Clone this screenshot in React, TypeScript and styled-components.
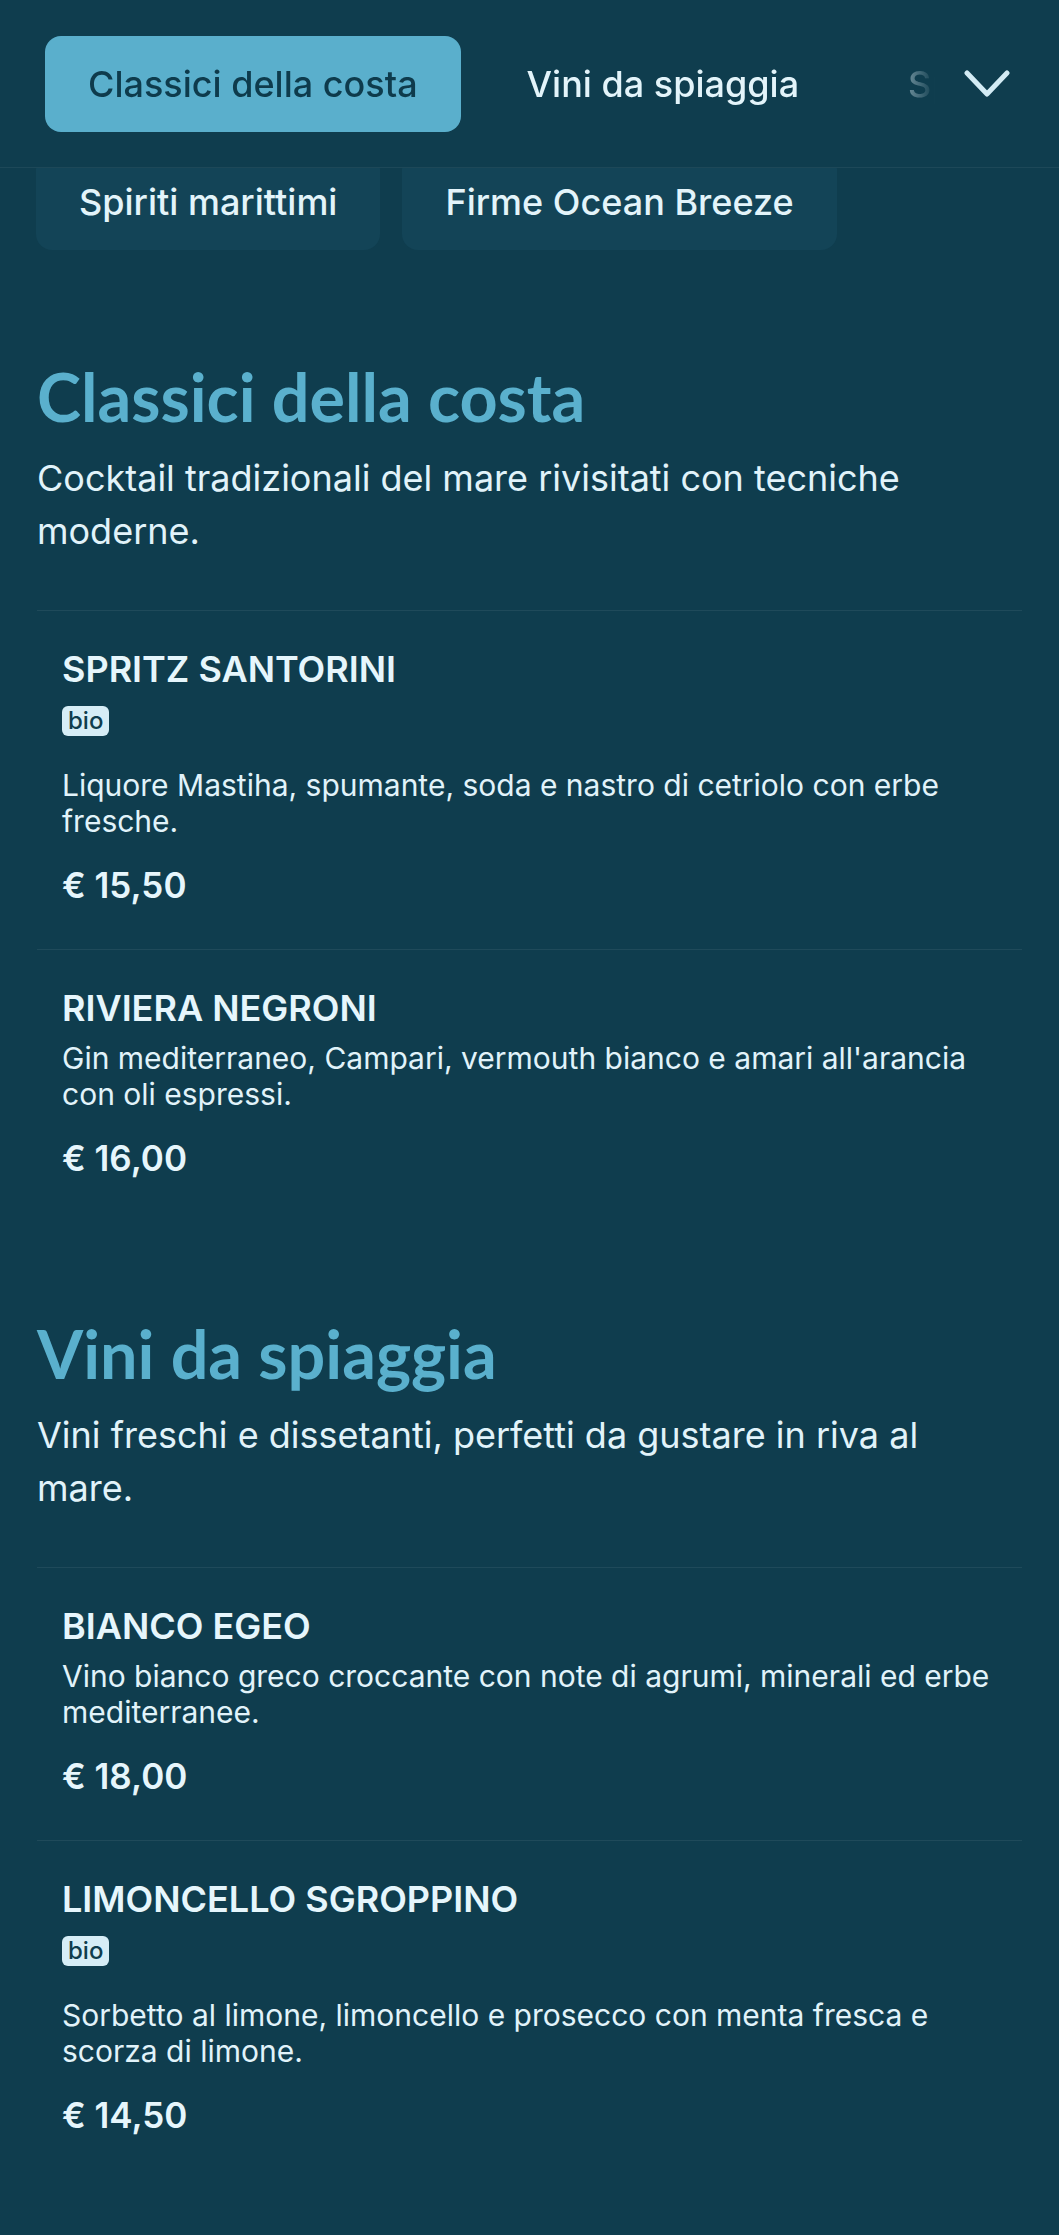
import React from 'react'
import styled, { createGlobalStyle } from 'styled-components'

const GlobalStyle = createGlobalStyle`
  html, body {
    margin: 0;
    padding: 0;
    background: #0f3d4e;
  }
  body {
    font-family: 'Inter', 'Noto Sans', sans-serif;
    color: #e1f3fa;
  }
  * { box-sizing: border-box; }
`

const Page = styled.div`
  min-height: 100vh;
  background: #0f3d4e;
`

const Header = styled.header`
  display: flex;
  align-items: center;
  height: 168px;
  padding: 0 20px 0 0;
  background: #0f3d4e;
  border-bottom: 1px solid rgba(255, 255, 255, 0.06);
`

const TabStrip = styled.nav`
  flex: 1;
  display: flex;
  gap: 23px;
  padding-left: 45px;
  overflow: hidden;
  -webkit-mask-image: linear-gradient(to right, #000 calc(100% - 62px), transparent);
  mask-image: linear-gradient(to right, #000 calc(100% - 62px), transparent);
`

const Tab = styled.button<{ $active?: boolean }>`
  flex-shrink: 0;
  height: 96px;
  padding: 0 43px;
  border: 0;
  border-radius: 16px;
  background: ${p => (p.$active ? '#5aafcc' : 'transparent')};
  color: ${p => (p.$active ? '#0e3b4c' : '#e3f4fa')};
  font-family: 'Inter', sans-serif;
  font-size: 36px;
  font-weight: 500;
  line-height: 96px;
  white-space: nowrap;
`

const ExpandButton = styled.button`
  width: 104px;
  height: 96px;
  display: flex;
  align-items: center;
  justify-content: center;
  border: 0;
  background: transparent;
  padding: 0;
`

const PeekRow = styled.div`
  height: 82px;
  overflow: hidden;
`

const PeekInner = styled.div`
  display: flex;
  gap: 22px;
  margin-top: -14px;
  padding-left: 36px;
`

const PeekChip = styled.div`
  height: 96px;
  padding: 0 43px;
  border-radius: 16px;
  background: #134457;
  color: #e3f4fa;
  font-size: 36px;
  font-weight: 500;
  line-height: 96px;
  white-space: nowrap;
`

const Main = styled.main`
  padding: 15px 37px 40px;
`

const Section = styled.section`
  padding-top: 90px;
`

const SectionTitle = styled.h2`
  margin: 0;
  font-family: 'Lato', 'Noto Sans', sans-serif;
  font-size: 66.5px;
  font-weight: 700;
  line-height: 82px;
  color: #5ab0cd;
`

const SectionIntro = styled.p`
  margin: 15px 0 52px;
  font-size: 36px;
  line-height: 53px;
  color: #e1f3fa;
`

const Item = styled.article`
  padding: 36px 25px 43px;
  border-top: 1px solid rgba(255, 255, 255, 0.07);
`

const ItemName = styled.h3`
  margin: 0;
  font-size: 36px;
  font-weight: 600;
  line-height: 44px;
  color: #e6f6fc;
`

const Badge = styled.span`
  display: block;
  width: fit-content;
  margin: 15px 0 31px;
  height: 30px;
  padding: 0 6px;
  border-radius: 6px;
  background: #d6edf6;
  color: #0f3d4e;
  font-size: 24px;
  font-weight: 500;
  line-height: 30px;
`

const ItemDesc = styled.p`
  margin: 10px 0 0;
  font-size: 30px;
  line-height: 36px;
  color: #e1f3fa;
`

const ItemPrice = styled.div`
  margin-top: 25px;
  font-size: 35px;
  font-weight: 600;
  line-height: 42px;
  color: #e6f6fc;
`

type Drink = { name: string; bio?: boolean; desc: string; price: string }
type MenuSection = { title: string; intro: string; items: Drink[] }

const tabs = ['Classici della costa', 'Vini da spiaggia', 'Spiriti marittimi', 'Firme Ocean Breeze']

const sections: MenuSection[] = [
  {
    title: 'Classici della costa',
    intro: 'Cocktail tradizionali del mare rivisitati con tecniche moderne.',
    items: [
      {
        name: 'SPRITZ SANTORINI',
        bio: true,
        desc: 'Liquore Mastiha, spumante, soda e nastro di cetriolo con erbe fresche.',
        price: '€ 15,50',
      },
      {
        name: 'RIVIERA NEGRONI',
        desc: "Gin mediterraneo, Campari, vermouth bianco e amari all'arancia con oli espressi.",
        price: '€ 16,00',
      },
    ],
  },
  {
    title: 'Vini da spiaggia',
    intro: 'Vini freschi e dissetanti, perfetti da gustare in riva al mare.',
    items: [
      {
        name: 'BIANCO EGEO',
        desc: 'Vino bianco greco croccante con note di agrumi, minerali ed erbe mediterranee.',
        price: '€ 18,00',
      },
      {
        name: 'LIMONCELLO SGROPPINO',
        bio: true,
        desc: 'Sorbetto al limone, limoncello e prosecco con menta fresca e scorza di limone.',
        price: '€ 14,50',
      },
    ],
  },
]

const Chevron = () => (
  <svg width="46" height="28" viewBox="0 0 46 28" fill="none">
    <polyline
      points="3,3 23,24 43,3"
      stroke="#d3ebf4"
      strokeWidth="5"
      strokeLinecap="round"
      strokeLinejoin="round"
    />
  </svg>
)

export default function App() {
  return (
    <Page>
      <GlobalStyle />
      <Header>
        <TabStrip>
          {tabs.map((t, i) => (
            <Tab key={t} $active={i === 0}>{t}</Tab>
          ))}
        </TabStrip>
        <ExpandButton aria-label="Mostra tutte le categorie">
          <Chevron />
        </ExpandButton>
      </Header>

      <PeekRow>
        <PeekInner>
          <PeekChip>Spiriti marittimi</PeekChip>
          <PeekChip>Firme Ocean Breeze</PeekChip>
        </PeekInner>
      </PeekRow>

      <Main>
        {sections.map(s => (
          <Section key={s.title}>
            <SectionTitle>{s.title}</SectionTitle>
            <SectionIntro>{s.intro}</SectionIntro>
            {s.items.map(d => (
              <Item key={d.name}>
                <ItemName>{d.name}</ItemName>
                {d.bio && <Badge>bio</Badge>}
                <ItemDesc>{d.desc}</ItemDesc>
                <ItemPrice>{d.price}</ItemPrice>
              </Item>
            ))}
          </Section>
        ))}
      </Main>
    </Page>
  )
}
